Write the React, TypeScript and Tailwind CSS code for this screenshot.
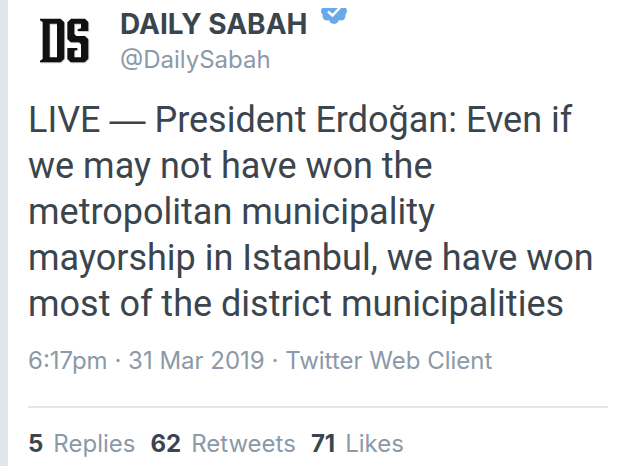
const stats = [
  { count: 5, label: "Replies" },
  { count: 62, label: "Retweets" },
  { count: 71, label: "Likes" },
];

function Logo() {
  return (
    <svg viewBox="0 0 210 210" className="size-[70px] shrink-0" role="img" aria-label="Daily Sabah logo">
      <g fillRule="evenodd" fill="#111">
        <path
          d="M30 38H92L103 49V158L92 169H30V164L38 159V48L30 43ZM59 53V154H81V53Z"
          className="drop-shadow-[2px_3px_2px_#ccc]"
        />
        <path
          d="M123 38H165L175 48V75H143V70L153 67V53H133V84L139 90H165L175 100V158L164 169H122L112 159V126H142V131L133 134V154H153V115L147 109H122L112 99V49Z"
          className="drop-shadow-[2px_3px_2px_#ccc]"
        />
      </g>
    </svg>
  );
}

function VerifiedBadge() {
  return (
    <svg viewBox="0 0 26 16" className="h-4 w-[26px] shrink-0" role="img" aria-label="Verified account">
      <g fill="#69a9e8">
        <circle cx="13" cy="3" r="9" />
        <circle cx="4.5" cy="3" r="4.5" />
        <circle cx="21.5" cy="3" r="4.5" />
        <circle cx="6" cy="8" r="4.5" />
        <circle cx="20" cy="8" r="4.5" />
        <circle cx="13" cy="11" r="5" />
      </g>
      <path d="M7 3.5L11.5 7.5L19 -0.5" fill="none" stroke="#fff" strokeWidth="2.4" />
    </svg>
  );
}

export default function App() {
  return (
    <main className="min-h-screen border-l-8 border-[#e1e6ea] bg-white px-5 font-['Inter','Liberation_Sans',sans-serif] text-2xl text-[#3b454e]">
      <article>
        <header className="flex items-start pt-[6px]">
          <div className="w-[92px] shrink-0 pl-[2px]">
            <Logo />
          </div>
          <div>
            <div className="flex items-start gap-[14px]">
              <h1 className="text-[28px] leading-9 font-bold">DAILY SABAH</h1>
              <div className="pt-[2px]">
                <VerifiedBadge />
              </div>
            </div>
            <a href="#profile" className="block leading-9 text-[#8b99a8]">
              @DailySabah
            </a>
          </div>
        </header>
        <p className="mt-[19px] font-['Roboto','Liberation_Sans',sans-serif] text-[36px] leading-[46px]">
          LIVE <span className="font-['Liberation_Sans',sans-serif] leading-none">—</span> President Erdoğan: Even
          if we may not have won the metropolitan municipality mayorship in Istanbul, we have won most of the
          district municipalities
        </p>
        <p className="mt-4 leading-9 text-[#8b99a8]">6:17pm · 31 Mar 2019 · Twitter Web Client</p>
        <footer className="mt-[27px] border-t-2 border-[#e1e8ed] pt-[18px]">
          <ul className="flex gap-[15px] leading-9">
            {stats.map((stat) => (
              <li key={stat.label} className="flex gap-[10px]">
                <b>{stat.count}</b>
                <span className="text-[#8b99a8]">{stat.label}</span>
              </li>
            ))}
          </ul>
        </footer>
      </article>
    </main>
  );
}
